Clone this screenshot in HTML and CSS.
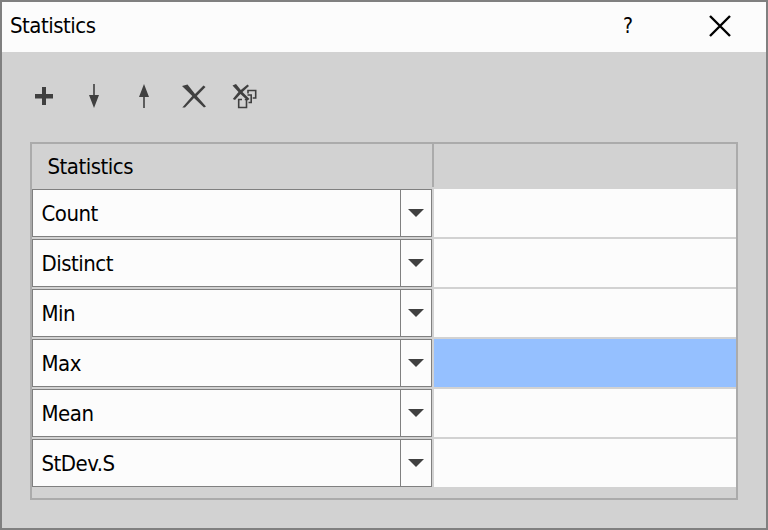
FILE: index.html
```
<!DOCTYPE html>
<html lang="en">
<head>
<meta charset="utf-8">
<title>Statistics</title>
<link rel="stylesheet" href="styles.css">
</head>
<body>
<div class="dialog">
  <header class="titlebar">
    <span class="title">Statistics</span>
    <span class="help">?</span>
    <svg class="close" width="24" height="24" viewBox="0 0 24 24"><path d="M2 2 22 22M22 2 2 22"/></svg>
  </header>
  <div class="toolbar">
    <svg class="tool" viewBox="0 0 50 32"><path d="M15 14h7V7h4v7h7v4.500H26V25h-4v-6.500h-7z"/></svg>
    <svg class="tool" viewBox="0 0 50 32"><path d="M23.200 4h1.600v11H29l-5 13-5-13h4.200z"/></svg>
    <svg class="tool" viewBox="0 0 50 32"><path d="M23.200 28h1.600V17H29L24 4l-5 13h4.200z"/></svg>
    <svg class="tool" viewBox="0 0 50 32"><path d="M12 6 17.500 4.500 25 14 33.500 5.500 35.500 7 26.800 16 36 26.500 34 27.500 24 18 15 27.500H12.300L22.300 16z"/></svg>
    <svg class="tool" viewBox="0 0 50 32"><path d="M12.500 5.500 16 4 20.800 10 27.500 4.500 29 6 22.500 12 29.500 19 27.500 20.500 20.500 14 15 20 12.800 19 18.500 12z"/><path class="line" d="M22 19.500H18.700V27.500H26.500V19.500H24.800M27.500 15H31.200V22.500H28.500M28 13.500V10.500H35.700V18H32.700"/></svg>
  </div>
  <main class="table">
    <div class="head"><div class="hcell">Statistics</div><div></div></div>
    <div class="row"><div class="combo"><span class="label">Count</span><span class="drop"><svg width="16" height="8"><path d="M0 0h16L8 8z"/></svg></span></div><div class="value"></div></div>
    <div class="row"><div class="combo"><span class="label">Distinct</span><span class="drop"><svg width="16" height="8"><path d="M0 0h16L8 8z"/></svg></span></div><div class="value"></div></div>
    <div class="row"><div class="combo"><span class="label">Min</span><span class="drop"><svg width="16" height="8"><path d="M0 0h16L8 8z"/></svg></span></div><div class="value"></div></div>
    <div class="row"><div class="combo"><span class="label">Max</span><span class="drop"><svg width="16" height="8"><path d="M0 0h16L8 8z"/></svg></span></div><div class="value selected"></div></div>
    <div class="row"><div class="combo"><span class="label">Mean</span><span class="drop"><svg width="16" height="8"><path d="M0 0h16L8 8z"/></svg></span></div><div class="value"></div></div>
    <div class="row"><div class="combo"><span class="label">StDev.S</span><span class="drop"><svg width="16" height="8"><path d="M0 0h16L8 8z"/></svg></span></div><div class="value"></div></div>
  </main>
</div>
</body>
</html>
```
FILE: styles.css
```
* { box-sizing: border-box; }
body {
  margin: 0;
  font: 22px/26px Tahoma, "DejaVu Sans Condensed", "DejaVu Sans", sans-serif;
  font-stretch: condensed;
  letter-spacing: -0.5px;
  color: #000;
}
.dialog {
  width: 768px;
  height: 530px;
  border: 2px solid #808080;
  background: #d2d2d2;
}
.titlebar {
  display: flex;
  align-items: center;
  height: 50px;
  padding: 0 34px 2px 8px;
  background: #fcfcfc;
}
.title { flex: 1; }
.help { width: 12px; margin-right: 73px; font-size: 21px; }
.close { fill: none; stroke: #000; stroke-width: 2.4; }
.toolbar {
  display: flex;
  height: 32px;
  margin: 28px 0 30px 18px;
}
.tool { width: 50px; height: 32px; fill: #404040; }
.line { fill: none; stroke: #404040; stroke-width: 1.6; }
.table {
  width: 708px;
  height: 358px;
  margin-left: 28px;
  border: 2px solid #ababab;
}
.head { display: flex; height: 45px; padding-bottom: 2px; }
.hcell {
  width: 402px;
  padding: 10px 0 0 15.500px;
  border-right: 2px solid #ababab;
}
.row {
  display: grid;
  grid-template-columns: 400px 1fr;
  column-gap: 2px;
  height: 48px;
  margin-bottom: 2px;
}
.combo {
  display: flex;
  border: 1px solid #808080;
  background: #fcfcfc;
}
.label { flex: 1; padding: 11px 0 0 8.500px; }
.drop {
  display: flex;
  width: 31px;
  padding: 19px 0 0 7px;
  border-left: 1px solid #808080;
}
.drop svg { fill: #404040; }
.value { background: #fcfcfc; }
.selected { background: #95c0ff; }
```
